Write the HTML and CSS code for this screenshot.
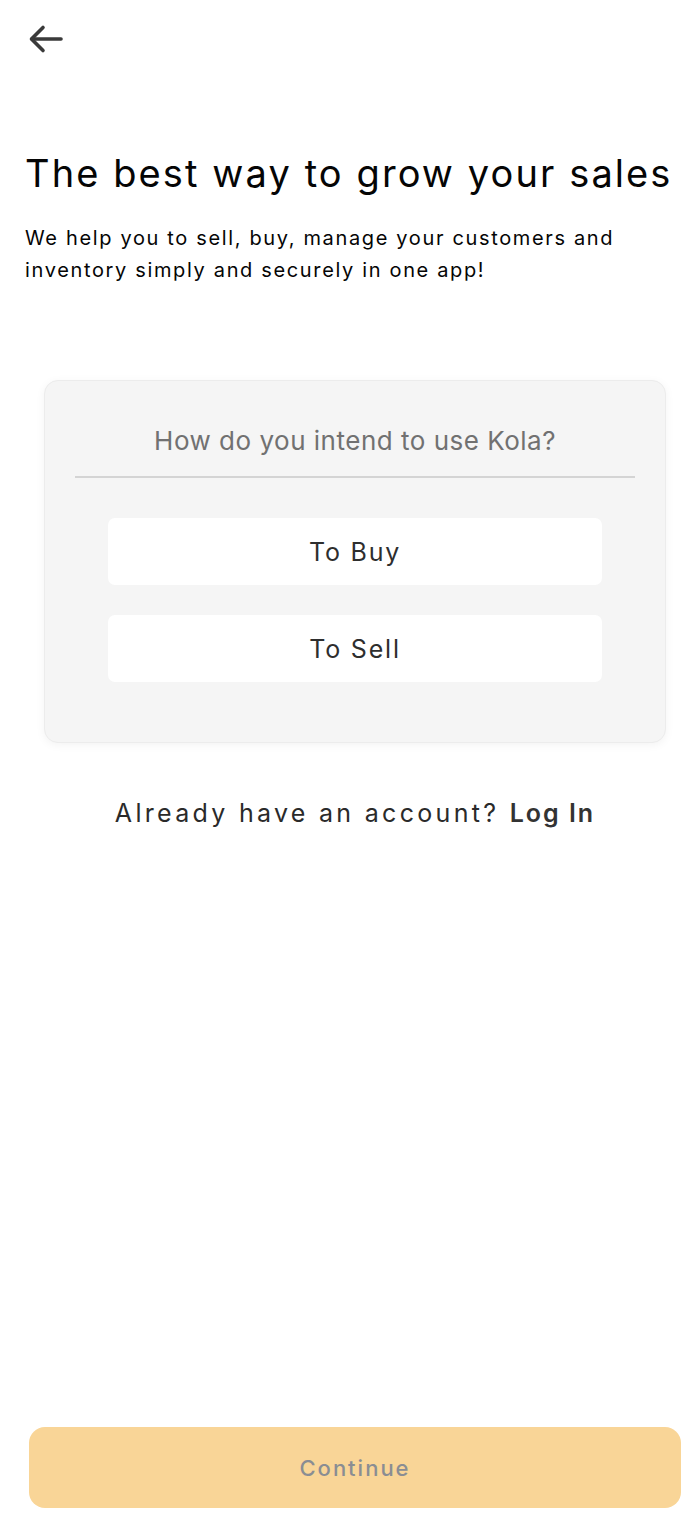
FILE: index.html
```html
<!DOCTYPE html>
<html lang="en">
<head>
<meta charset="utf-8">
<title>Kola - Get started</title>
<link rel="stylesheet" href="styles.css">
</head>
<body>
<div class="screen">
  <header class="topbar">
    <button class="back" aria-label="Back">
      <svg width="36" height="30" viewBox="0 0 36 30" fill="none" stroke="#3a3a3a" stroke-width="3.6" stroke-linecap="round" stroke-linejoin="round">
        <path d="M33 15H4"/>
        <path d="M15 3.5L3.5 15L15 26.5"/>
      </svg>
    </button>
  </header>

  <section class="intro">
    <h1 class="title">The best way to grow your sales</h1>
    <p class="subtitle">We help you to sell, buy, manage your customers and inventory simply and securely in one app!</p>
  </section>

  <div class="column">
    <div class="card">
      <p class="question">How do you intend to use Kola?</p>
      <div class="divider"></div>
      <div class="options">
        <button class="option">To Buy</button>
        <button class="option">To Sell</button>
      </div>
    </div>

    <p class="login">Already have an account? <span class="login-link">Log In</span></p>

    <button class="continue" disabled>Continue</button>
  </div>
</div>
</body>
</html>
```

FILE: styles.css
```css
* { box-sizing: border-box; }

html, body {
  margin: 0;
  padding: 0;
  background: #ffffff;
}

body {
  font-family: Inter, "Open Sans", sans-serif;
  color: #000;
}

.screen {
  min-height: 1518px;
  display: flex;
  flex-direction: column;
}

.topbar {
  padding: 24px 0 0 28px;
  height: 56px;
}

.back {
  border: 0;
  background: none;
  padding: 0;
  display: block;
  cursor: pointer;
}

.intro {
  padding: 93px 40px 0 25px;
}

.title {
  margin: 0;
  font-size: 38px;
  font-weight: 400;
  line-height: 48px;
  letter-spacing: 2.1px;
  color: #050505;
  white-space: nowrap;
}

.subtitle {
  margin: 25px 0 0;
  font-size: 20px;
  line-height: 32px;
  letter-spacing: 1.65px;
  color: #050505;
}

.column {
  flex: 1;
  display: flex;
  flex-direction: column;
  padding: 0 14px 10px 29px;
}

.card {
  margin: 94px 15px 0;
  background: #f5f5f5;
  border: 1px solid #ececec;
  border-radius: 14px;
  box-shadow: 0 2px 10px rgba(0, 0, 0, 0.05);
  padding: 41px 30px 60px;
  display: flex;
  flex-direction: column;
}

.question {
  margin: 0;
  text-align: center;
  font-size: 26px;
  line-height: 38px;
  letter-spacing: 0.5px;
  color: #717171;
}

.divider {
  margin-top: 16px;
  height: 2px;
  background: #d4d4d4;
}

.options {
  display: flex;
  flex-direction: column;
  gap: 30px;
  padding: 40px 33px 0;
}

.option {
  height: 67px;
  border: 0;
  border-radius: 7px;
  background: #ffffff;
  font-family: inherit;
  font-size: 25px;
  letter-spacing: 1.8px;
  color: #2e2e2e;
  cursor: pointer;
}

.login {
  margin: 51px 0 0;
  text-align: center;
  font-size: 25px;
  line-height: 38px;
  letter-spacing: 3.3px;
  color: #2a2a2a;
}

.login-link {
  font-weight: 600;
  letter-spacing: 2px;
  color: #333;
}

.continue {
  margin-top: auto;
  height: 81px;
  border: 0;
  border-radius: 16px;
  background: #f9d597;
  font-family: inherit;
  font-size: 22px;
  font-weight: 500;
  letter-spacing: 2px;
  color: #8a8d93;
}
```
